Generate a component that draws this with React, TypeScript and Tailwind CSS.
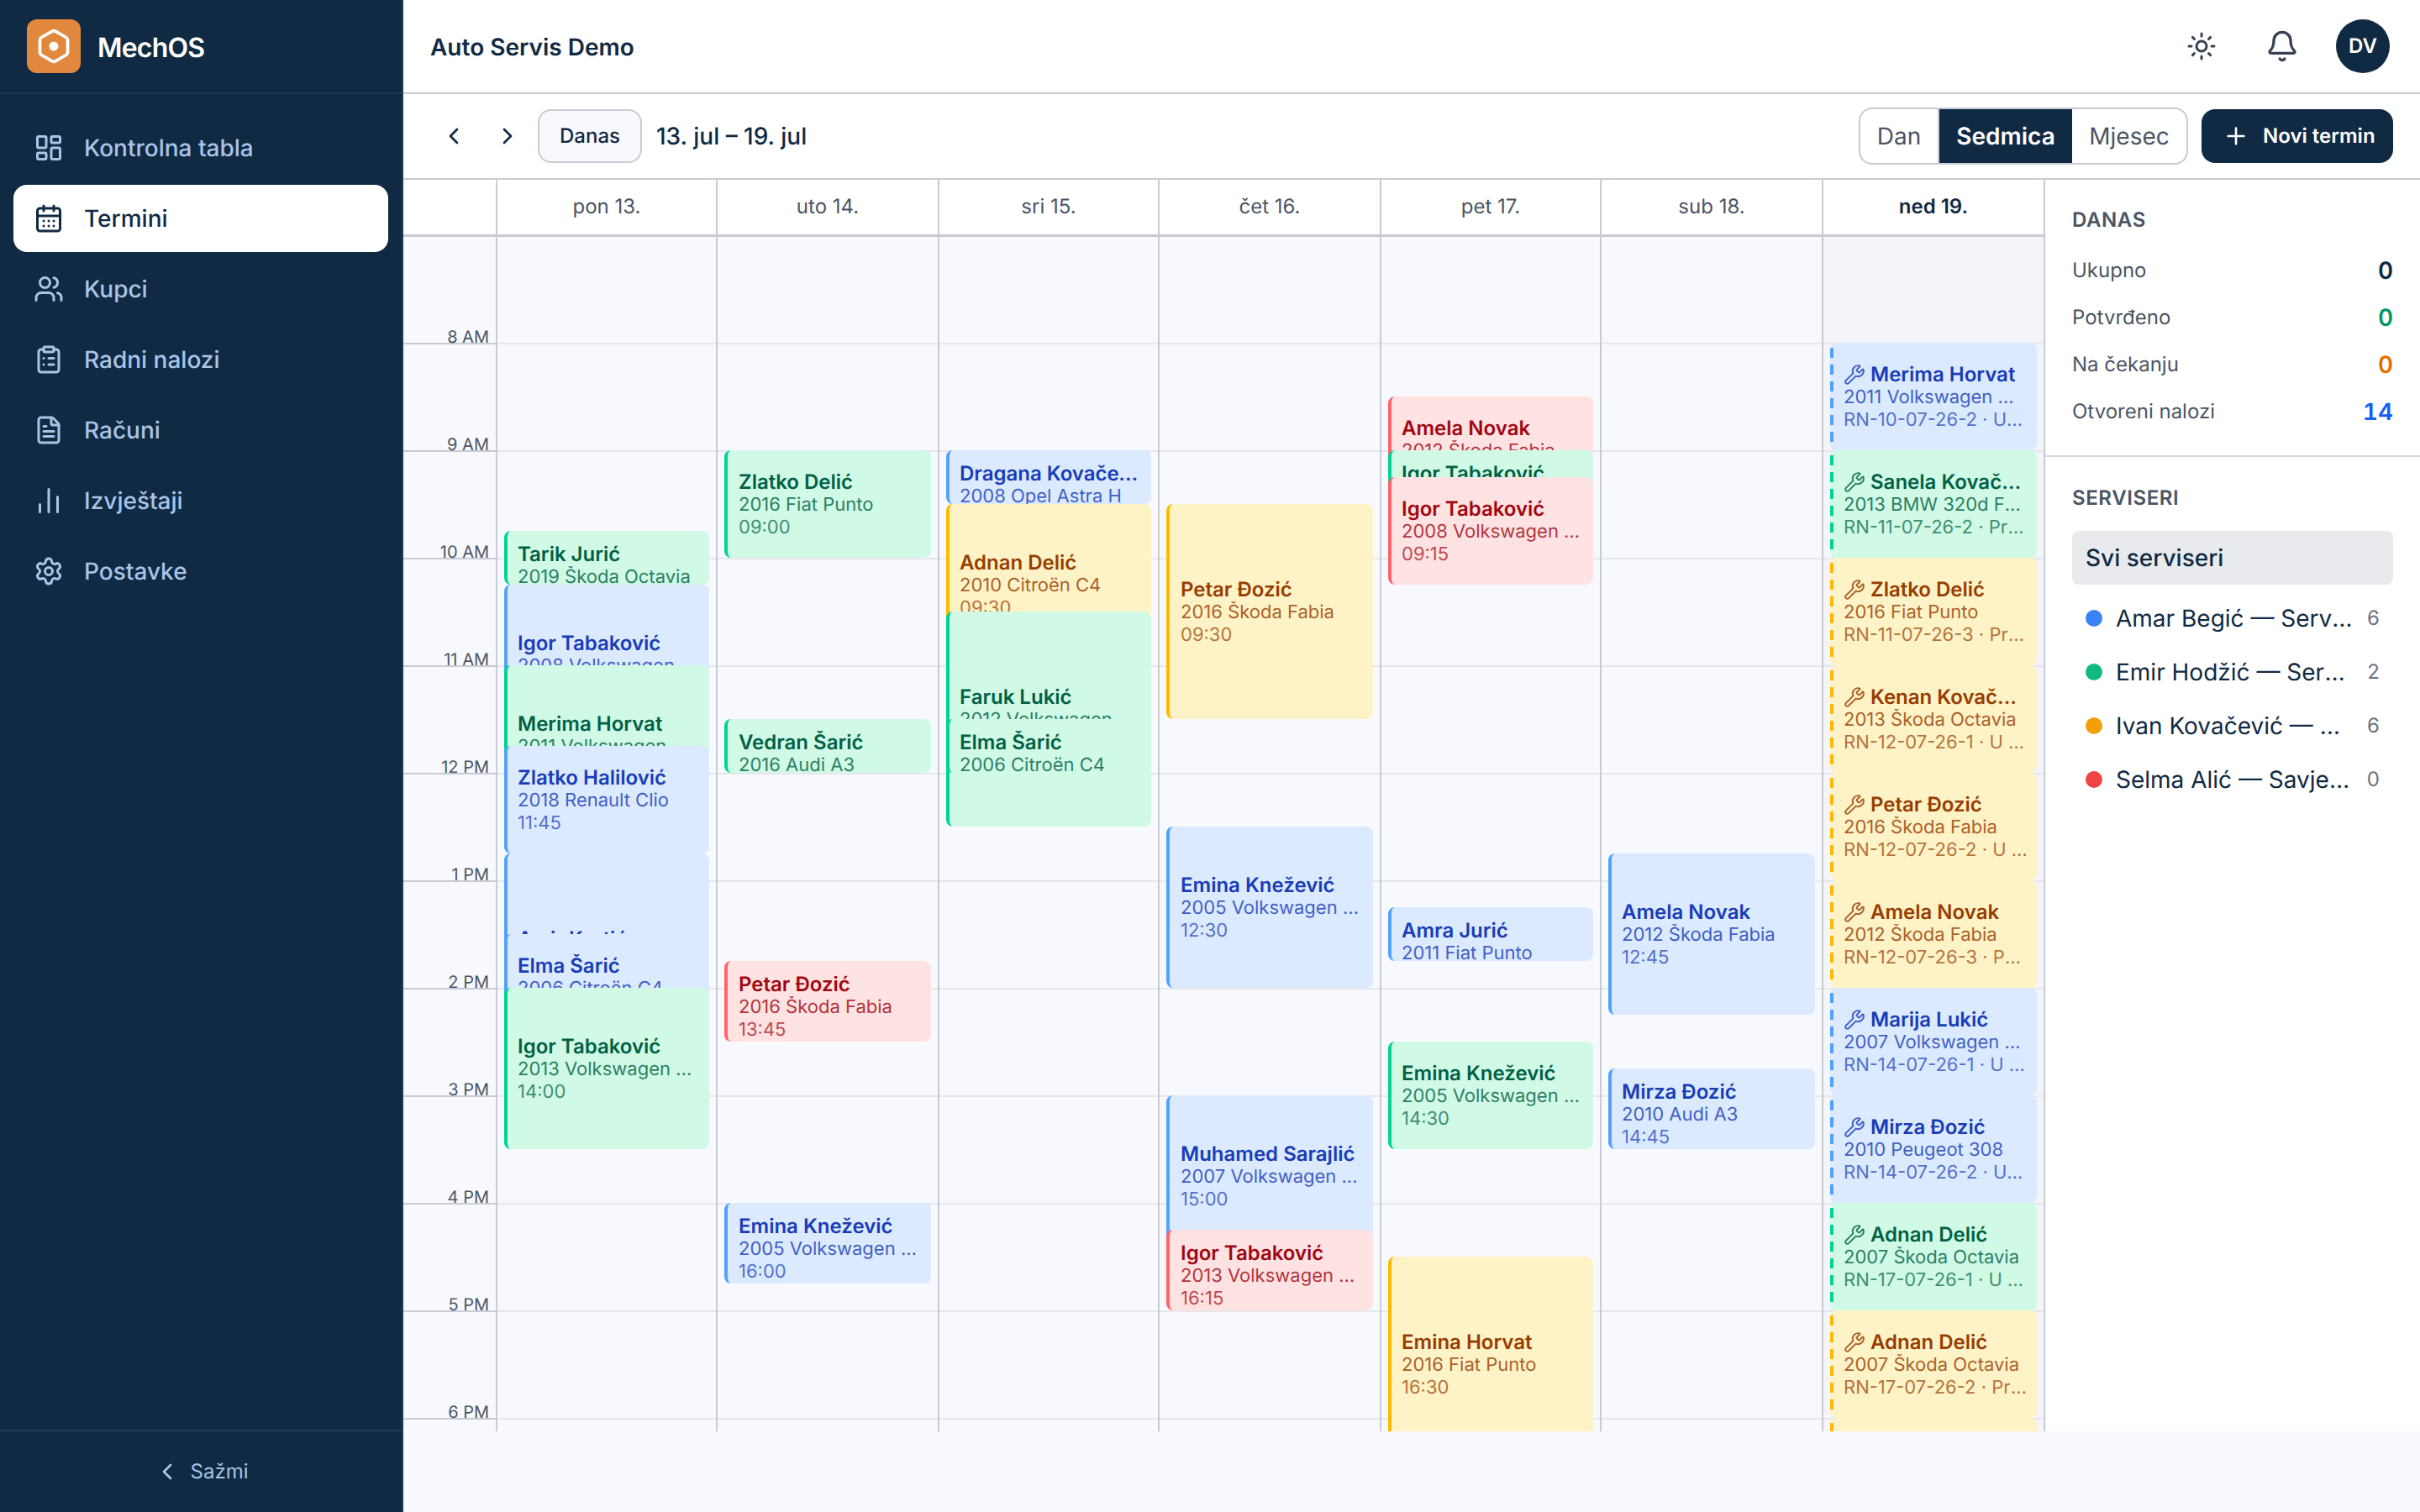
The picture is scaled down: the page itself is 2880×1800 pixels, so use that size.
import React from "react";
import {
  LayoutDashboard, CalendarDays, Users, ClipboardList, FileText, ChartNoAxesColumn, Settings,
  ChevronLeft, ChevronRight, Sun, Bell, Plus, Wrench,
} from "lucide-react";

type Tone = "blue" | "green" | "amber" | "red";
type Ev = { y: number; h: number; tone: Tone; name: string; sub: string; third: string; order?: boolean };

const toneBox: Record<Tone, string> = {
  blue: "bg-blue-100 border-blue-400 text-blue-800",
  green: "bg-emerald-100 border-emerald-400 text-emerald-800",
  amber: "bg-amber-100 border-amber-400 text-amber-800",
  red: "bg-red-100 border-red-400 text-red-800",
};

const toneDash: Record<Tone, string> = {
  blue: "bg-[repeating-linear-gradient(to_bottom,transparent_0,transparent_6px,#51a2ff_6px,#51a2ff_18px,transparent_18px,transparent_20px)]",
  green: "bg-[repeating-linear-gradient(to_bottom,transparent_0,transparent_6px,#00d492_6px,#00d492_18px,transparent_18px,transparent_20px)]",
  amber: "bg-[repeating-linear-gradient(to_bottom,transparent_0,transparent_6px,#ffb900_6px,#ffb900_18px,transparent_18px,transparent_20px)]",
  red: "bg-[repeating-linear-gradient(to_bottom,transparent_0,transparent_6px,#ff6467_6px,#ff6467_18px,transparent_18px,transparent_20px)]",
};

const days: { label: string; today?: boolean; inset?: boolean; events: Ev[] }[] = [
  {
    label: "pon 13.",
    events: [
      { y: 632, h: 64, tone: "green", name: "Tarik Jurić", sub: "2019 Škoda Octavia", third: "09:45" },
      { y: 696, h: 192, tone: "blue", name: "Igor Tabaković", sub: "2008 Volkswagen Passat", third: "10:15" },
      { y: 792, h: 192, tone: "green", name: "Merima Horvat", sub: "2011 Volkswagen Multivan", third: "11:00" },
      { y: 888, h: 128, tone: "blue", name: "Zlatko Halilović", sub: "2018 Renault Clio", third: "11:45" },
      { y: 1016, h: 256, tone: "blue", name: "Amir Kurtić", sub: "2015 Audi A4", third: "12:45" },
      { y: 1112, h: 128, tone: "blue", name: "Elma Šarić", sub: "2006 Citroën C4", third: "13:30" },
      { y: 1176, h: 192, tone: "green", name: "Igor Tabaković", sub: "2013 Volkswagen Passat", third: "14:00" },
    ],
  },
  {
    label: "uto 14.",
    inset: true,
    events: [
      { y: 536, h: 128, tone: "green", name: "Zlatko Delić", sub: "2016 Fiat Punto", third: "09:00" },
      { y: 856, h: 64, tone: "green", name: "Vedran Šarić", sub: "2016 Audi A3", third: "11:30" },
      { y: 1144, h: 96, tone: "red", name: "Petar Đozić", sub: "2016 Škoda Fabia", third: "13:45" },
      { y: 1432, h: 96, tone: "blue", name: "Emina Knežević", sub: "2005 Volkswagen Passat", third: "16:00" },
    ],
  },
  {
    label: "sri 15.",
    events: [
      { y: 536, h: 64, tone: "blue", name: "Dragana Kovačević", sub: "2008 Opel Astra H", third: "09:00" },
      { y: 600, h: 192, tone: "amber", name: "Adnan Delić", sub: "2010 Citroën C4", third: "09:30" },
      { y: 728, h: 256, tone: "green", name: "Faruk Lukić", sub: "2012 Volkswagen Golf", third: "10:30" },
      { y: 856, h: 64, tone: "green", name: "Elma Šarić", sub: "2006 Citroën C4", third: "11:30" },
    ],
  },
  {
    label: "čet 16.",
    inset: true,
    events: [
      { y: 600, h: 256, tone: "amber", name: "Petar Đozić", sub: "2016 Škoda Fabia", third: "09:30" },
      { y: 984, h: 192, tone: "blue", name: "Emina Knežević", sub: "2005 Volkswagen Passat", third: "12:30" },
      { y: 1304, h: 192, tone: "blue", name: "Muhamed Sarajlić", sub: "2007 Volkswagen Passat", third: "15:00" },
      { y: 1464, h: 96, tone: "red", name: "Igor Tabaković", sub: "2013 Volkswagen Passat", third: "16:15" },
    ],
  },
  {
    label: "pet 17.",
    events: [
      { y: 472, h: 128, tone: "red", name: "Amela Novak", sub: "2012 Škoda Fabia", third: "08:30" },
      { y: 536, h: 64, tone: "green", name: "Igor Tabaković", sub: "2013 Volkswagen Passat", third: "09:00" },
      { y: 568, h: 128, tone: "red", name: "Igor Tabaković", sub: "2008 Volkswagen Passat", third: "09:15" },
      { y: 1080, h: 64, tone: "blue", name: "Amra Jurić", sub: "2011 Fiat Punto", third: "13:15" },
      { y: 1240, h: 128, tone: "green", name: "Emina Knežević", sub: "2005 Volkswagen Passat", third: "14:30" },
      { y: 1496, h: 256, tone: "amber", name: "Emina Horvat", sub: "2016 Fiat Punto", third: "16:30" },
    ],
  },
  {
    label: "sub 18.",
    events: [
      { y: 1016, h: 192, tone: "blue", name: "Amela Novak", sub: "2012 Škoda Fabia", third: "12:45" },
      { y: 1272, h: 96, tone: "blue", name: "Mirza Đozić", sub: "2010 Audi A3", third: "14:45" },
    ],
  },
  {
    label: "ned 19.",
    today: true,
    events: [
      { y: 408, h: 128, tone: "blue", order: true, name: "Merima Horvat", sub: "2011 Volkswagen Multivan", third: "RN-10-07-26-2 · U radu" },
      { y: 536, h: 128, tone: "green", order: true, name: "Sanela Kovačević", sub: "2013 BMW 320d F30 Touring", third: "RN-11-07-26-2 · Primljen" },
      { y: 664, h: 128, tone: "amber", order: true, name: "Zlatko Delić", sub: "2016 Fiat Punto", third: "RN-11-07-26-3 · Primljen" },
      { y: 792, h: 128, tone: "amber", order: true, name: "Kenan Kovačević", sub: "2013 Škoda Octavia", third: "RN-12-07-26-1 · U radu" },
      { y: 920, h: 128, tone: "amber", order: true, name: "Petar Đozić", sub: "2016 Škoda Fabia", third: "RN-12-07-26-2 · U radu" },
      { y: 1048, h: 128, tone: "amber", order: true, name: "Amela Novak", sub: "2012 Škoda Fabia", third: "RN-12-07-26-3 · Primljen" },
      { y: 1176, h: 128, tone: "blue", order: true, name: "Marija Lukić", sub: "2007 Volkswagen Passat", third: "RN-14-07-26-1 · U radu" },
      { y: 1304, h: 128, tone: "blue", order: true, name: "Mirza Đozić", sub: "2010 Peugeot 308", third: "RN-14-07-26-2 · U radu" },
      { y: 1432, h: 128, tone: "green", order: true, name: "Adnan Delić", sub: "2007 Škoda Octavia", third: "RN-17-07-26-1 · U radu" },
      { y: 1560, h: 128, tone: "amber", order: true, name: "Adnan Delić", sub: "2007 Škoda Octavia", third: "RN-17-07-26-2 · Primljen" },
      { y: 1688, h: 128, tone: "amber", order: true, name: "Adnan Delić", sub: "2007 Škoda Octavia", third: "RN-17-07-26-3 · Primljen" },
    ],
  },
];

const hours = ["", "8 AM", "9 AM", "10 AM", "11 AM", "12 PM", "1 PM", "2 PM", "3 PM", "4 PM", "5 PM", "6 PM"];

const nav = [
  { label: "Kontrolna tabla", Icon: LayoutDashboard },
  { label: "Termini", Icon: CalendarDays, active: true },
  { label: "Kupci", Icon: Users },
  { label: "Radni nalozi", Icon: ClipboardList },
  { label: "Računi", Icon: FileText },
  { label: "Izvještaji", Icon: ChartNoAxesColumn },
  { label: "Postavke", Icon: Settings },
];

function Logo() {
  return (
    <div className="flex h-16 w-16 items-center justify-center rounded-xl bg-[#e2883e]">
      <svg width="44" height="44" viewBox="0 0 24 24" fill="none" stroke="white" strokeWidth="2" strokeLinejoin="round">
        <path d="M21 16V8a2 2 0 0 0-1-1.73l-7-4a2 2 0 0 0-2 0l-7 4A2 2 0 0 0 3 8v8a2 2 0 0 0 1 1.73l7 4a2 2 0 0 0 2 0l7-4A2 2 0 0 0 21 16z" />
        <circle cx="12" cy="12" r="3" fill="white" stroke="none" />
      </svg>
    </div>
  );
}

function Sidebar() {
  return (
    <aside className="flex h-full w-[480px] shrink-0 flex-col border-r-2 border-[#1a3a5c] bg-[#102a43]">
      <div className="flex h-28 shrink-0 items-center gap-5 border-b-2 border-[#1a3a5c] pl-8">
        <Logo />
        <span className="mt-[4px] text-[32px] font-semibold tracking-[-0.8px] text-white">MechOS</span>
      </div>
      <nav className="flex flex-1 flex-col gap-1 px-4 pt-6">
        {nav.map(({ label, Icon, active }) => (
          <div
            key={label}
            className={
              "flex h-20 items-center gap-6 rounded-2xl pl-6 text-[28px] font-medium " +
              (active ? "bg-white text-[#102a43]" : "text-[#a9c4e8]")
            }
          >
            <Icon size={36} strokeWidth={2} />
            <span>{label}</span>
          </div>
        ))}
      </nav>
      <div className="flex h-[98px] shrink-0 items-center justify-center gap-3 border-t-2 border-[#1a3a5c] text-[24px] text-[#a9c4e8]">
        <ChevronLeft size={32} strokeWidth={2} />
        <span>Sažmi</span>
      </div>
    </aside>
  );
}

function Header() {
  return (
    <header className="flex h-28 shrink-0 items-center justify-between border-b-2 border-[#c9cbd4] bg-white pl-8 pr-9">
      <span className="mt-[2px] text-[28px] font-semibold text-[#102a43]">Auto Servis Demo</span>
      <div className="flex items-center gap-6">
        <div className="flex items-center gap-4">
          <div className="flex h-20 w-20 items-center justify-center text-[#374151]"><Sun size={36} strokeWidth={2} /></div>
          <div className="flex h-20 w-20 items-center justify-center text-[#374151]"><Bell size={40} strokeWidth={2} /></div>
        </div>
        <div className="flex h-16 w-16 items-center justify-center rounded-full bg-[#102a43] text-[24px] font-semibold text-white">DV</div>
      </div>
    </header>
  );
}

function Toolbar() {
  return (
    <div className="flex h-[102px] shrink-0 items-center justify-between border-b-2 border-[#c9cbd4] bg-white pl-7 pr-8">
      <div className="flex items-center">
        <div className="flex h-16 w-16 items-center justify-center text-[#102a43]"><ChevronLeft size={32} strokeWidth={2} /></div>
        <div className="flex h-16 w-16 items-center justify-center text-[#102a43]"><ChevronRight size={32} strokeWidth={2} /></div>
        <div className="ml-1 flex h-16 w-[124px] items-center justify-center rounded-2xl border-2 border-[#c9cbd4] bg-[#f8f9fe] text-[24px] font-medium text-[#102a43]">Danas</div>
        <span className="ml-[17px] text-[28px] font-medium text-[#102a43]">13. jul – 19. jul</span>
      </div>
      <div className="flex items-center gap-4">
        <div className="flex h-[68px] w-[392px] items-stretch overflow-hidden rounded-2xl border-2 border-[#c9cbd4] text-[28px]">
          <div className="flex w-[94px] items-center justify-center border-r-2 border-[#c9cbd4] text-[#4b5563]">Dan</div>
          <div className="flex w-[158px] items-center justify-center bg-[#102a43] font-semibold text-white">Sedmica</div>
          <div className="flex flex-1 items-center justify-center text-[#4b5563]">Mjesec</div>
        </div>
        <div className="flex h-16 w-[228px] items-center gap-4 rounded-2xl bg-[#102a43] pl-[25px] text-[24px] font-semibold text-white">
          <Plus size={32} strokeWidth={2} />
          <span>Novi termin</span>
        </div>
      </div>
    </div>
  );
}

function EventCard({ ev, inset }: { ev: Ev; inset?: boolean }) {
  return (
    <div
      className={
        "absolute left-[8px] right-[8px] flex flex-col overflow-hidden rounded-lg pb-[12px] pr-[11px] pt-[14px] [justify-content:safe_center] " +
        toneBox[ev.tone] +
        (ev.order ? " pl-4" : " border-l-4") +
        (!ev.order && inset ? " pl-[13px]" : !ev.order ? " pl-3" : "")
      }
      style={{ top: ev.y - 282, height: ev.h }}
    >
      {ev.order && <div className={"absolute bottom-0 left-0 top-0 w-1 " + toneDash[ev.tone]} />}
      <div className="flex h-[28px] shrink-0 items-center text-[24px] font-semibold leading-[28px]">
        {ev.order && <Wrench size={26} strokeWidth={1.8} className="mr-[6px] shrink-0 opacity-80" />}
        <span className="truncate">{ev.name}</span>
      </div>
      <div className="h-[27px] shrink-0 truncate text-[22px] leading-[27px] opacity-80">{ev.sub}</div>
      <div className="h-[27px] shrink-0 truncate text-[22px] leading-[27px] opacity-70">{ev.third}</div>
    </div>
  );
}

function Calendar() {
  return (
    <div className="flex w-[1954px] shrink-0 flex-col overflow-hidden border-r-2 border-[#c9cbd4]">
      <div className="flex h-[68px] shrink-0 border-b-[3px] border-[#c9cbd4] bg-white">
        <div className="w-[110px] shrink-0" />
        <div className="grid flex-1 grid-cols-[262px_264px_262px_264px_262px_264px_264px]">
          {days.map((d) => (
            <div
              key={d.label}
              className={
                "flex items-center justify-center border-l-2 border-[#c9cbd4] pb-[2px] text-[24px] " +
                (d.today ? "font-semibold text-[#102a43]" : "text-[#4b5563]")
              }
            >
              {d.label}
            </div>
          ))}
        </div>
      </div>
      <div className="flex min-h-0 flex-1 overflow-hidden">
        <div className="w-[110px] shrink-0">
          {hours.map((h, i) => (
            <div
              key={i}
              className={
                "relative " + (i === 0 ? "h-[126px]" : "h-[128px] border-t-2 border-[#c9cbd4]")
              }
            >
              {h && (
                <span className="absolute bottom-full right-[8px] mb-[-3px] text-[20px] leading-[24px] text-[#4b5563]">{h}</span>
              )}
            </div>
          ))}
        </div>
        <div className="relative grid flex-1 grid-cols-[262px_264px_262px_264px_262px_264px_264px]">
          {days.map((d) => (
            <div key={d.label} className={"relative border-l-2 border-[#c9cbd4] " + (d.today ? "bg-[#f3f5fa]" : "")}>
              {hours.map((h, i) => (
                <div key={i} className={i === 0 ? "h-[126px]" : "h-[128px] border-t-2 border-[#e5e7eb]"} />
              ))}
              {d.events.map((ev, i) => (
                <EventCard key={i} ev={ev} inset={d.inset} />
              ))}
            </div>
          ))}
        </div>
      </div>
    </div>
  );
}

const stats = [
  { label: "Ukupno", value: "0", cls: "text-[#102a43]" },
  { label: "Potvrđeno", value: "0", cls: "text-emerald-600" },
  { label: "Na čekanju", value: "0", cls: "text-amber-600" },
  { label: "Otvoreni nalozi", value: "14", cls: "text-blue-600" },
];

const mechanics = [
  { name: "Amar Begić — Serviser", n: 6, dot: "bg-[#3b82f6]" },
  { name: "Emir Hodžić — Serviser", n: 2, dot: "bg-[#10b981]" },
  { name: "Ivan Kovačević — Serviser", n: 6, dot: "bg-[#f59e0b]" },
  { name: "Selma Alić — Savjetnik", n: 0, dot: "bg-[#ef4444]" },
];

function RightPanel() {
  return (
    <div className="flex min-w-0 flex-1 flex-col bg-white">
      <section className="h-[330px] shrink-0 border-b-2 border-[#d5d7de] px-8 pt-[33px]">
        <div className="text-[24px] font-semibold leading-[30px] tracking-[0.6px] text-[#4b5563]">DANAS</div>
        <div className="mt-[17px] flex flex-col">
          {stats.map((s) => (
            <div key={s.label} className="flex h-14 items-center justify-between">
              <span className="text-[24px] text-[#4b5563]">{s.label}</span>
              <span className={"text-[28px] font-semibold tabular-nums " + s.cls}>{s.value}</span>
            </div>
          ))}
        </div>
      </section>
      <section className="px-8 pt-[34px]">
        <div className="text-[24px] font-semibold leading-[30px] tracking-[0.6px] text-[#4b5563]">SERVISERI</div>
        <div className="mt-[24px] flex h-16 items-center rounded-lg bg-[#e9eaee] px-4 text-[28px] font-medium text-[#102a43]">Svi serviseri</div>
        <div className="mt-[8px] flex flex-col">
          {mechanics.map((m) => (
            <div key={m.name} className="flex h-16 items-center gap-4 px-4 text-[28px] text-[#102a43]">
              <span className={"h-5 w-5 shrink-0 rounded-full " + m.dot} />
              <span className="min-w-0 flex-1 truncate">{m.name}</span>
              <span className="text-[24px] text-[#6b7280]">{m.n}</span>
            </div>
          ))}
        </div>
      </section>
    </div>
  );
}

export default function App() {
  return (
    <div className="flex h-screen w-full overflow-hidden bg-[#f8f9fe] [font-family:Inter,sans-serif] [text-rendering:geometricPrecision]">
      <Sidebar />
      <main className="flex min-w-0 flex-1 flex-col pb-24">
        <Header />
        <Toolbar />
        <div className="flex min-h-0 flex-1">
          <Calendar />
          <RightPanel />
        </div>
      </main>
    </div>
  );
}
